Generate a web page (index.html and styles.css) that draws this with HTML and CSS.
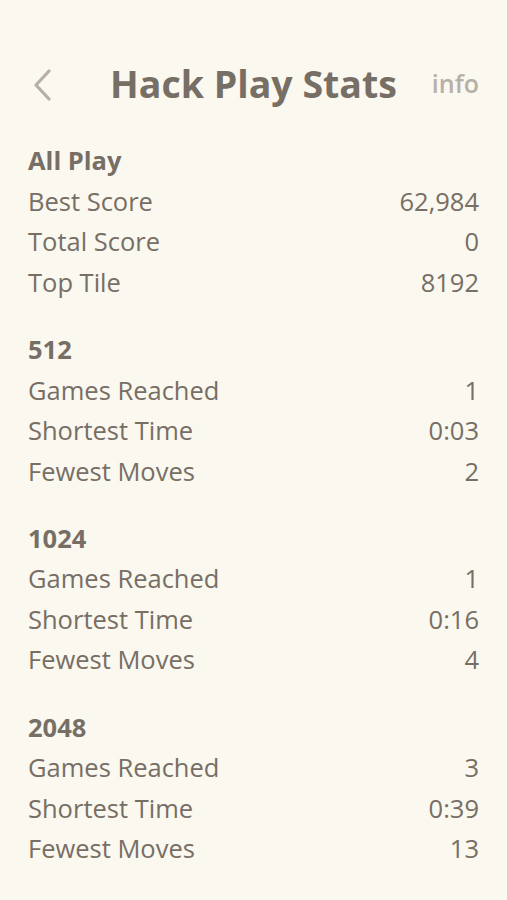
FILE: index.html
```html
<!DOCTYPE html>
<html>
<head>
<meta charset="utf-8">
<link rel="stylesheet" href="styles.css">
</head>
<body>
<div class="page">
  <header class="topbar">
    <div class="back">
      <svg width="20" height="32" viewBox="0 0 20 32"><polyline points="16,2 3,16 16,30" fill="none" stroke="#b7afa6" stroke-width="3.2" stroke-linecap="round" stroke-linejoin="round"/></svg>
    </div>
    <h1 class="title">Hack Play Stats</h1>
    <div class="info">info</div>
  </header>

  <section class="group">
    <div class="row head">All Play</div>
    <div class="row"><span>Best Score</span><span>62,984</span></div>
    <div class="row"><span>Total Score</span><span>0</span></div>
    <div class="row"><span>Top Tile</span><span>8192</span></div>
  </section>

  <section class="group">
    <div class="row head">512</div>
    <div class="row"><span>Games Reached</span><span>1</span></div>
    <div class="row"><span>Shortest Time</span><span>0:03</span></div>
    <div class="row"><span>Fewest Moves</span><span>2</span></div>
  </section>

  <section class="group">
    <div class="row head">1024</div>
    <div class="row"><span>Games Reached</span><span>1</span></div>
    <div class="row"><span>Shortest Time</span><span>0:16</span></div>
    <div class="row"><span>Fewest Moves</span><span>4</span></div>
  </section>

  <section class="group">
    <div class="row head">2048</div>
    <div class="row"><span>Games Reached</span><span>3</span></div>
    <div class="row"><span>Shortest Time</span><span>0:39</span></div>
    <div class="row"><span>Fewest Moves</span><span>13</span></div>
  </section>
</div>
</body>
</html>
```
FILE: styles.css
```css
html, body {
  margin: 0;
  padding: 0;
  background: #faf8ef;
}
body {
  font-family: "Open Sans", "Liberation Sans", sans-serif;
  color: #776e65;
}
.page {
  padding: 0 28px;
}
.topbar {
  display: grid;
  grid-template-columns: 1fr auto 1fr;
  align-items: center;
  height: 60px;
  margin-top: 53px;
  margin-bottom: 27px;
}
.back {
  display: flex;
  align-items: center;
  padding-left: 5px;
  padding-top: 3px;
}
.back svg { display: block; }
.title {
  margin: 0;
  font-size: 37.5px;
  font-weight: 700;
  white-space: nowrap;
  color: #776e65;
}
.info {
  text-align: right;
  font-size: 25px;
  font-weight: 600;
  color: #b8b0a8;
}
.group {
  margin-bottom: 26.8px;
}
.row {
  display: flex;
  justify-content: space-between;
  align-items: center;
  height: 40.5px;
  font-size: 25.5px;
}
.row.head {
  font-weight: 700;
}
```
